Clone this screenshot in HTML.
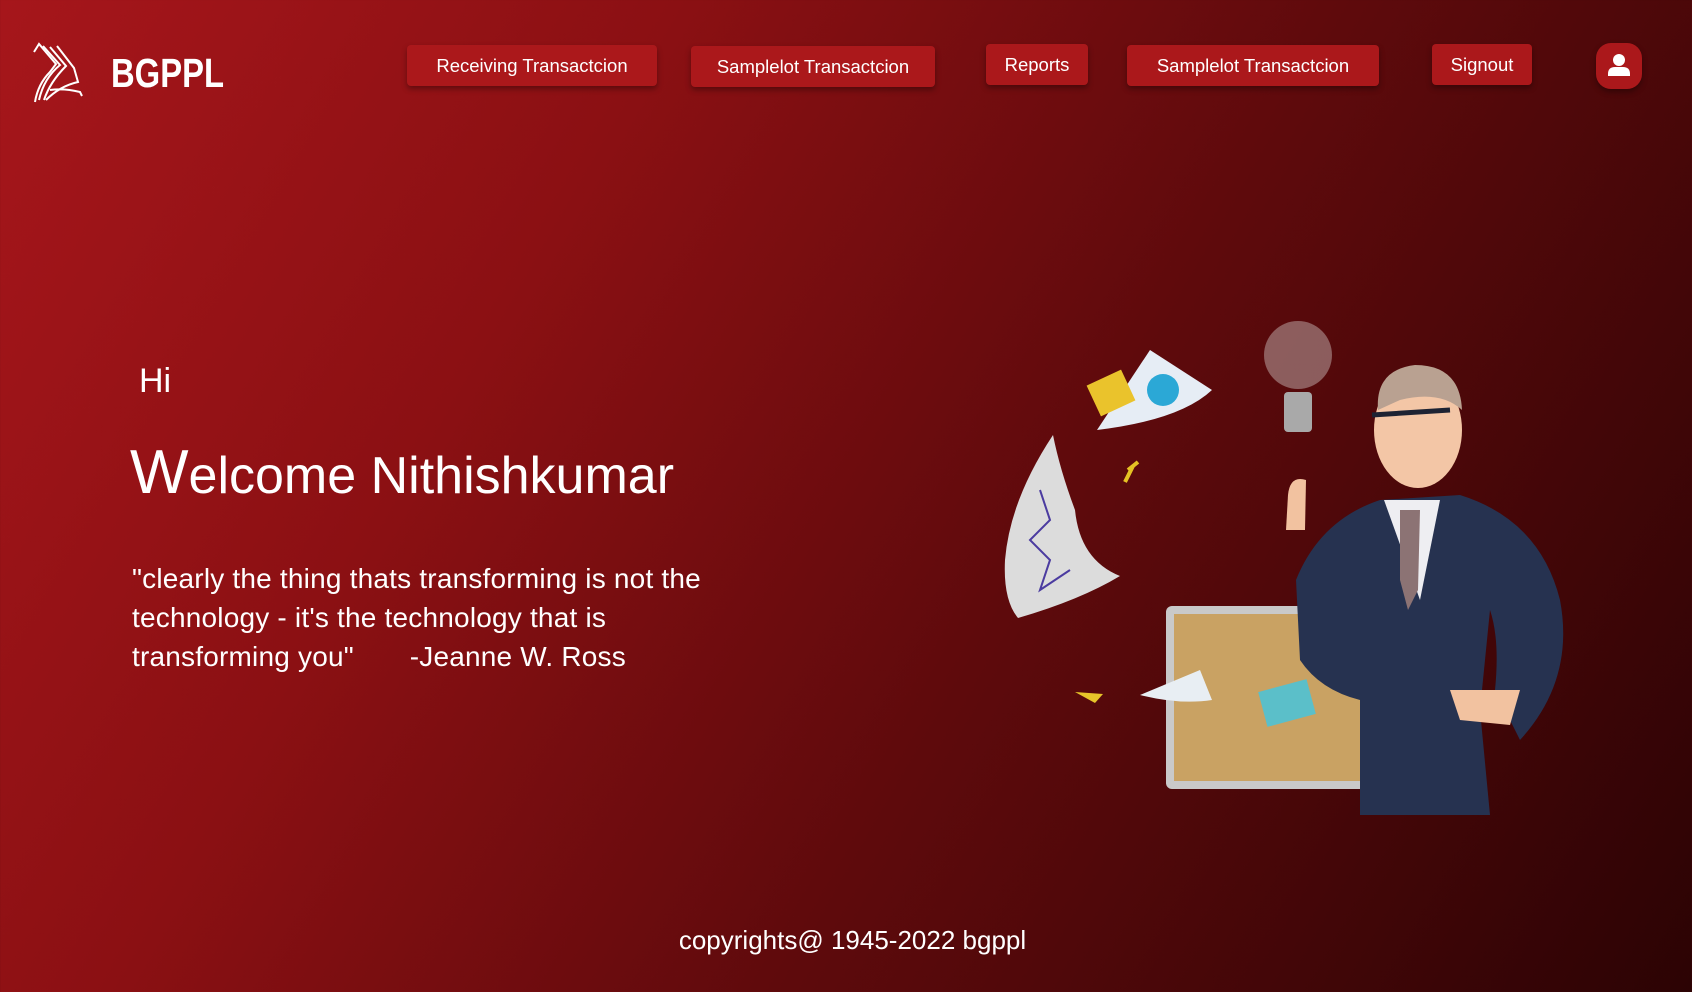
<!DOCTYPE html>
<html><head><meta charset="utf-8"><style>
*{margin:0;padding:0;box-sizing:border-box}
body{width:1692px;height:992px;overflow:hidden;font-family:"Liberation Sans",sans-serif;color:#fff;
background:linear-gradient(120deg,#a6161b 0%,#8b1013 30%,#5e0a0c 60%,#2c0304 100%);position:relative}
.btn{position:absolute;height:41px;background:#ab181b;border-radius:4px;box-shadow:0 3px 6px rgba(0,0,0,.35);font-size:18.5px;line-height:41px;text-align:center;color:#fff}
.t{position:absolute;white-space:nowrap}
</style></head><body>
<svg style="position:absolute;left:30px;top:42px" width="64" height="62" viewBox="0 0 64 62" fill="none" stroke="#fff" stroke-width="2">
<path d="M4 10 L9 2 L26 22 L20 30 Q8 42 5 60"/>
<path d="M13 4 L30 23 Q14 36 9 58"/>
<path d="M20 5 L36 24 Q20 40 14 58"/>
<path d="M27 4 L44 26 L48 40 Q30 44 16 58"/>
<path d="M20 48 Q34 46 50 50 L52 54"/>
</svg>
<div class="t" style="left:111px;top:50px;font-size:41px;font-weight:bold;transform:scaleX(0.8);transform-origin:0 0">BGPPL</div>
<div class="btn" style="left:407px;top:45px;width:250px">Receiving Transactcion</div>
<div class="btn" style="left:691px;top:46px;width:244px">Samplelot Transactcion</div>
<div class="btn" style="left:986px;top:44px;width:102px">Reports</div>
<div class="btn" style="left:1127px;top:45px;width:252px">Samplelot Transactcion</div>
<div class="btn" style="left:1432px;top:44px;width:100px">Signout</div>
<div style="position:absolute;left:1596px;top:43px;width:46px;height:46px;border-radius:15px;background:#ab181b;box-shadow:0 3px 6px rgba(0,0,0,.35)">
<svg width="46" height="46" viewBox="0 0 46 46"><circle cx="23" cy="17" r="6" fill="#fff"/><path d="M12 31 Q12 24 19 24 L27 24 Q34 24 34 31 L34 33 L12 33 Z" fill="#fff"/></svg></div>
<div class="t" style="left:139px;top:362px;font-size:34px">Hi</div>
<div class="t" style="left:130px;top:437px;font-size:52px"><span style="font-size:62px">W</span>elcome Nithishkumar</div>
<div class="t" style="left:132px;top:559px;font-size:28px;line-height:39px;font-weight:300;letter-spacing:0.2px">"clearly the thing thats transforming is not the<br>technology - it's the technology that is<br>transforming you"&nbsp;&nbsp;&nbsp;&nbsp;&nbsp;&nbsp;&nbsp;-Jeanne W. Ross</div>
<div class="t" style="left:0;width:1705px;text-align:center;top:925px;font-size:26px">copyrights@ 1945-2022 bgppl</div>
<svg style="position:absolute;left:0;top:0" width="1692" height="992" viewBox="0 0 1692 992">
<rect x="1166" y="606" width="200" height="183" rx="6" fill="#c9c9c9"/>
<rect x="1174" y="614" width="190" height="167" fill="#c9a263"/>
<rect x="1262" y="685" width="50" height="36" fill="#5bbfc9" transform="rotate(-15 1287 703)"/>
<path d="M1140 695 L1200 670 L1212 700 Q1180 705 1140 695Z" fill="#e8eef3"/>
<path d="M1075 692 L1103 694 L1095 703Z" fill="#e7c52a"/>
<path d="M1053 435 Q1010 500 1005 560 Q1003 600 1018 618 Q1080 600 1120 576 Q1080 560 1075 510 Q1060 470 1053 435Z" fill="#dcdcdc"/>
<path d="M1040 490 L1050 520 L1030 540 L1050 560 L1040 590 L1070 570" stroke="#4b3ba0" stroke-width="2" fill="none"/>
<path d="M1097 430 L1150 350 L1212 390 Q1180 420 1097 430Z" fill="#e6edf5"/>
<circle cx="1163" cy="390" r="16" fill="#2ba8d6"/>
<rect x="1092" y="376" width="38" height="34" fill="#eac32c" transform="rotate(-25 1111 393)"/>
<path d="M1128 470 L1138 462 M1133 466 L1125 482" stroke="#e5c224" stroke-width="4"/>
<circle cx="1298" cy="355" r="34" fill="#b9a3a3" opacity=".55"/>
<rect x="1284" y="392" width="28" height="40" rx="4" fill="#a9a9a9"/>
<path d="M1296 580 Q1320 520 1380 500 L1460 495 Q1540 520 1560 600 Q1575 680 1520 740 L1495 690 Q1500 640 1490 610 L1480 710 L1490 815 L1360 815 L1360 700 Q1320 690 1300 660 Z" fill="#263250"/>
<path d="M1384 500 L1440 500 L1420 600 Z" fill="#eeeef2"/>
<path d="M1400 510 L1420 510 L1418 590 L1408 610 L1400 580Z" fill="#8c7374"/>
<path d="M1288 495 Q1290 475 1306 480 L1305 530 L1286 530 Z" fill="#f2c2a0"/>
<ellipse cx="1418" cy="430" rx="44" ry="58" fill="#f3c6a6"/>
<path d="M1378 410 Q1375 370 1415 365 Q1460 365 1462 410 Q1440 390 1400 400Z" fill="#b9a191"/>
<path d="M1372 415 L1450 410" stroke="#1d2333" stroke-width="5"/>
<path d="M1450 690 L1520 690 L1510 725 L1460 720Z" fill="#f2c2a0"/>
</svg>
</body></html>
